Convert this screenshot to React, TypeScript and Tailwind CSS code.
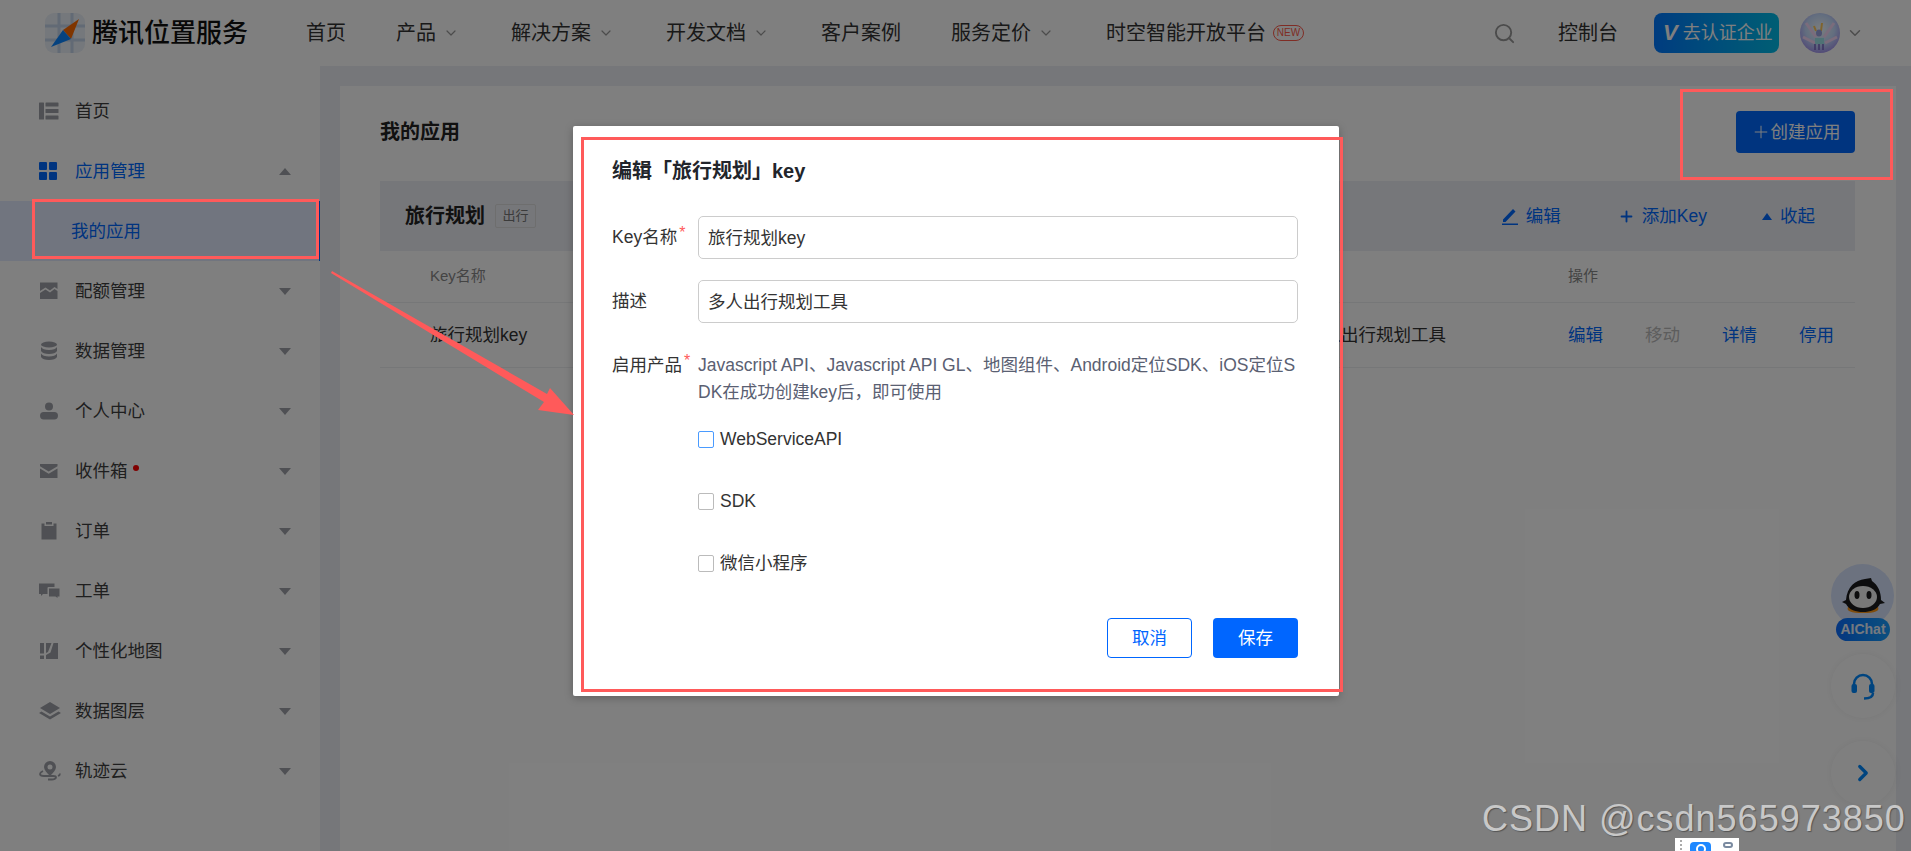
import { ChevronDown, Search, Plus, ChevronRight } from "lucide-react";
import type { ReactNode } from "react";

const font = `font-["Liberation_Sans","Noto_Sans_CJK_SC",sans-serif]`;

const navItems = [
  { label: "首页" },
  { label: "产品", arrow: true },
  { label: "解决方案", arrow: true },
  { label: "开发文档", arrow: true },
  { label: "客户案例" },
  { label: "服务定价", arrow: true },
];

const g = "#9fa1a8";

const sideItems: { label: string; icon: ReactNode; dot?: boolean; active?: boolean; open?: boolean; noArrow?: boolean }[] = [
  {
    label: "首页",
    noArrow: true,
    icon: (
      <svg width="20" height="20" viewBox="0 0 20 20" fill={g}>
        <rect x="0" y="1.5" width="5" height="17" rx="0.5" />
        <rect x="6.5" y="1.5" width="13" height="4" rx="0.5" />
        <rect x="6.5" y="8" width="13" height="4" rx="0.5" />
        <rect x="6.5" y="14.5" width="13" height="4" rx="0.5" />
      </svg>
    ),
  },
  {
    label: "应用管理",
    active: true,
    open: true,
    icon: (
      <svg width="20" height="20" viewBox="0 0 20 20" fill="#0069ff">
        <rect x="0" y="1" width="8" height="8" rx="1" />
        <rect x="10" y="1" width="8" height="8" rx="1" />
        <rect x="0" y="11" width="8" height="8" rx="1" />
        <rect x="10" y="11" width="8" height="8" rx="1" />
      </svg>
    ),
  },
  {
    label: "配额管理",
    icon: (
      <svg width="20" height="20" viewBox="0 0 20 20" fill={g}>
        <path d="M1 1.5h17.500v6.500l-3-2-4.500 3.500-4.500-3-5.500 3.500z" />
        <path d="M1 12l5.500-3.500 4.500 3 4.500-3.500 3 2v8H1z" />
      </svg>
    ),
  },
  {
    label: "数据管理",
    icon: (
      <svg width="20" height="20" viewBox="0 0 20 20" fill={g}>
        <ellipse cx="10" cy="3.500" rx="8" ry="3" />
        <path d="M2 6c1 2 4 3 8 3s7-1 8-3v4c-1 2-4 3-8 3s-7-1-8-3z" />
        <path d="M2 12.500c1 2 4 3 8 3s7-1 8-3V16c-1 2-4 3-8 3s-7-1-8-3z" />
      </svg>
    ),
  },
  {
    label: "个人中心",
    icon: (
      <svg width="20" height="20" viewBox="0 0 20 20" fill={g}>
        <circle cx="10" cy="5.500" r="4" />
        <rect x="1" y="11" width="18" height="7.500" rx="3.700" />
      </svg>
    ),
  },
  {
    label: "收件箱",
    dot: true,
    icon: (
      <svg width="20" height="20" viewBox="0 0 20 20" fill={g}>
        <path d="M1 3h17.500v2.200L9.700 10.500 1 5.200z" />
        <path d="M1 7.500l8.700 5.200 8.800-5.200V17H1z" />
      </svg>
    ),
  },
  {
    label: "订单",
    icon: (
      <svg width="20" height="20" viewBox="0 0 20 20" fill={g}>
        <path d="M2.500 2.500h3V5h9V2.500h3v16h-15z" />
        <rect x="7" y="1" width="6" height="2.500" />
      </svg>
    ),
  },
  {
    label: "工单",
    icon: (
      <svg width="22" height="20" viewBox="0 0 22 20" fill={g}>
        <path d="M0 2.500h15.500v3.500H9.500q-1 0-1 1v6H4l-2 2v-2H0z" />
        <path d="M10 7.500h10.500v8h-2v1.500l-2-1.500H10z" />
      </svg>
    ),
  },
  {
    label: "个性化地图",
    icon: (
      <svg width="20" height="20" viewBox="0 0 20 20" fill={g}>
        <path d="M1 2h4v10.500H1zM1 14.500h4V18H1z" />
        <path d="M7 2h5.500L9 11l-2 1zM14.500 2H19v16H7v-4l4.500-2.500z" />
      </svg>
    ),
  },
  {
    label: "数据图层",
    icon: (
      <svg width="22" height="20" viewBox="0 0 22 20" fill={g}>
        <path d="M11 1l10 6-10 6L1 7z" />
        <path d="M0 12l2.500-1.500L11 15.500l8.500-5L22 12 11 18.500z" />
      </svg>
    ),
  },
  {
    label: "轨迹云",
    icon: (
      <svg width="22" height="20" viewBox="0 0 22 20" fill="none">
        <path fillRule="evenodd" clipRule="evenodd" d="M11 0a6 6 0 0 1 6 6c0 3-3 6-6 9-3-3-6-6-6-9a6 6 0 0 1 6-6zm0 3.500a2.500 2.500 0 1 0 0 5 2.500 2.500 0 0 0 0-5z" fill={g} />
        <path d="M4 10c-2 1-3 2-3 3 0 1.500 2 2 4 2h9c2 0 3 .5 3 1.500S15 18.500 13 18.500H9m12-6c0 1-.7 2-2 2.500" stroke={g} strokeWidth="1.800" />
      </svg>
    ),
  },
];

function Caret({ up }: { up?: boolean }) {
  return (
    <svg width="12" height="7" viewBox="0 0 12 7" fill={g} className="ml-auto mr-[29px]">
      <polygon points={up ? "6,0 12,7 0,7" : "0,0 12,0 6,7"} />
    </svg>
  );
}

function SideRow({ item }: { item: (typeof sideItems)[number] }) {
  return (
    <div className="flex h-[60px] items-center pl-[39px]">
      <span className="flex w-[36px] shrink-0 items-center">{item.icon}</span>
      <span className={item.active ? "text-[#0069ff]" : "text-[#3f3f3f]"}>{item.label}</span>
      {item.dot && <span className="mb-[6px] ml-[5px] h-[6px] w-[6px] rounded-full bg-[#f00]" />}
      {!item.noArrow && <Caret up={item.open} />}
    </div>
  );
}

function Header() {
  return (
    <header className="flex h-[66px] shrink-0 items-center bg-white pl-[45px] pr-[47px] text-[20px] text-[#333]">
      <svg width="40" height="40" viewBox="0 0 40 40" className="shrink-0">
        <rect width="40" height="40" rx="9" fill="#eaf0f8" />
        <path d="M0 13h40M0 27h40M14 0v40M27 0v40" stroke="#c4d4ea" strokeWidth="3" />
        <path d="M34 6L18 17l8 9z" fill="#ff6a00" />
        <path d="M6 34l12-17 8 9z" fill="#0a84ff" />
      </svg>
      <span className="ml-[7px] text-[26px] font-medium leading-none text-[#111]">腾讯位置服务</span>
      <nav className="ml-[58px] flex items-center gap-[50px]">
        {navItems.map((n) => (
          <span key={n.label} className={n.arrow ? "mr-[2px] flex items-center" : "flex items-center"}>
            {n.label}
            {n.arrow && <ChevronDown size={16} strokeWidth={1.8} className="ml-[7px] text-[#999]" />}
          </span>
        ))}
        <span className="flex items-center">
          时空智能开放平台
          <span className="ml-[7px] flex h-[16px] w-[31px] items-center justify-center rounded-full border border-[#ff5a4a] text-[10px] leading-none text-[#ff5a4a]">
            NEW
          </span>
        </span>
      </nav>
      <div className="ml-auto flex items-center">
        <Search size={23} strokeWidth={2} className="text-[#999]" />
        <span className="ml-[42px]">控制台</span>
        <span className="ml-[36px] flex h-[40px] w-[125px] items-center rounded-[8px] bg-gradient-to-r from-[#0078ff] to-[#00bce8] pl-[9px] text-[18px] text-white">
          <span className="mr-[5px] text-[22px] font-bold italic leading-none">V</span>去认证企业
        </span>
        <svg width="40" height="40" viewBox="0 0 40 40" className="ml-[21px] shrink-0">
          <defs>
            <radialGradient id="av" cx="50%" cy="40%" r="60%">
              <stop offset="0" stopColor="#f6fcff" />
              <stop offset="0.6" stopColor="#c6dcff" />
              <stop offset="1" stopColor="#a496ee" />
            </radialGradient>
          </defs>
          <circle cx="20" cy="20" r="20" fill="url(#av)" />
          <path d="M6 10l10 14M34 10L24 24M3 24l12 6M37 24l-12 6" stroke="#f6d8f8" strokeWidth="3" />
          <path d="M14 13l2 5M22 10l-1 8" stroke="#ffc85a" strokeWidth="2" />
          <ellipse cx="19" cy="20" rx="3" ry="3.500" fill="#9aa2e0" />
          <path d="M15 25h9v6h-9z" fill="#9fe4ea" />
          <path d="M15 31v6M19 31v6M23 31v6" stroke="#7566c0" strokeWidth="1.500" />
        </svg>
        <ChevronDown size={18} strokeWidth={2} className="ml-[6px] text-[#999]" />
      </div>
    </header>
  );
}

function Sidebar() {
  return (
    <aside className="w-[320px] shrink-0 bg-white pt-[15px] text-[17.5px]">
      <SideRow item={sideItems[0]} />
      <SideRow item={sideItems[1]} />
      <div className="flex h-[60px] items-center border-r border-[#0069ff] bg-[#e3ebfe] pl-[71px] text-[#0069ff]">我的应用</div>
      {sideItems.slice(2).map((item) => (
        <SideRow key={item.label} item={item} />
      ))}
    </aside>
  );
}

function GroupAction({ icon, label, className }: { icon: ReactNode; label: string; className: string }) {
  return (
    <span className={`flex items-center ${className}`}>
      {icon}
      {label}
    </span>
  );
}

function Main() {
  return (
    <main className="min-w-0 flex-1 bg-[#eceef4] pl-[20px] pr-[15px] pt-[20px]">
      <div className="h-full bg-white pl-[40px] pr-[41px] pt-[25px] text-[17.5px] text-[#333]">
        <div className="flex h-[42px] items-center justify-between">
          <h2 className="text-[20px] font-bold text-[#222]">我的应用</h2>
          <span className="flex h-[42px] w-[119px] items-center justify-center rounded-[4px] bg-[#0069ff] text-[17.5px] text-white">
            <Plus size={20} strokeWidth={1.200} />创建应用
          </span>
        </div>
        <div className="mt-[28px] flex h-[70px] items-center bg-[#eceef4] pl-[25px] pr-[40px]">
          <span className="text-[20px] font-bold text-[#222]">旅行规划</span>
          <span className="ml-[10px] flex h-[24px] w-[41px] items-center justify-center rounded-[2px] border border-[#ddd] text-[13px] text-[#777]">出行</span>
          <div className="ml-auto flex items-center text-[#0069ff]">
            <GroupAction
              className="mr-[57px]"
              label="编辑"
              icon={
                <svg width="17" height="18" viewBox="0 0 17 18" fill="#0069ff" className="mr-[7px]">
                  <path d="M1 12.500L11 2l2.500 2.500-10 10.500H1zM0 16.500h16V18H0z" />
                </svg>
              }
            />
            <GroupAction className="mr-[55px]" label="添加Key" icon={<Plus size={17} strokeWidth={2.600} className="mr-[7px]" />} />
            <GroupAction
              label="收起"
              icon={
                <svg width="10" height="7" viewBox="0 0 10 7" fill="#0069ff" className="mr-[8px]">
                  <polygon points="5,0 10,7 0,7" />
                </svg>
              }
            />
          </div>
        </div>
        <div className="flex h-[52px] items-center border-b border-[#eceef0] pl-[50px] text-[15px] text-[#888]">
          <span className="w-[876px] shrink-0">Key名称</span>
          <span className="w-[262px] shrink-0">描述</span>
          <span>操作</span>
        </div>
        <div className="flex h-[65px] items-center border-b border-[#eceef0] pl-[50px]">
          <span className="w-[876px] shrink-0">旅行规划key</span>
          <span className="w-[262px] shrink-0">多人出行规划工具</span>
          <span className="flex">
            <span className="w-[77px] shrink-0 text-[#0069ff]">编辑</span>
            <span className="w-[77px] shrink-0 text-[#bbb]">移动</span>
            <span className="w-[77px] shrink-0 text-[#0069ff]">详情</span>
            <span className="shrink-0 text-[#0069ff]">停用</span>
          </span>
        </div>
      </div>
    </main>
  );
}

function Floaters() {
  return (
    <div className="absolute left-[1831px] top-[564px] flex w-[64px] flex-col items-center">
      <div className="relative h-[77px] w-[64px]">
        <div className="flex h-[63px] w-[63px] items-center justify-center rounded-full bg-[#d8e4ff]">
          <svg width="50" height="38" viewBox="0 0 50 38">
            <path d="M10 30q-3 6 15 6t15-6z" fill="#ff9a1a" />
            <path d="M4 25l4-2C9 10 17 3 27 2l6-1 1 3c6 4 9 11 9 19l4 3-5 1c-3 6-10 8-17 8S11 33 8 27z" fill="#1b1b1d" />
            <ellipse cx="25" cy="20" rx="14" ry="11" fill="#f1f1f1" />
            <ellipse cx="19" cy="18" rx="2.500" ry="4" fill="#1b1b1d" />
            <ellipse cx="31" cy="18" rx="2.500" ry="4" fill="#1b1b1d" />
          </svg>
        </div>
        <span className="absolute left-[5px] top-[54px] flex h-[23px] w-[54px] items-center justify-center rounded-full bg-gradient-to-r from-[#0d6cff] to-[#1b9fff] text-[14px] font-bold text-[#e9f2ff]">AIChat</span>
      </div>
      <div className="mt-[13px] flex h-[64px] w-[64px] items-center justify-center rounded-full bg-white shadow-[0_0_8px_rgba(0,0,0,0.06)]">
        <svg width="24" height="27" viewBox="0 0 24 27" fill="none">
          <path d="M3 13V11a9 9 0 0 1 18 0v2" stroke="#0088ff" strokeWidth="2.500" />
          <rect x="0.500" y="11" width="5.500" height="9" rx="2" fill="#0088ff" />
          <rect x="18" y="11" width="5.500" height="9" rx="2" fill="#0088ff" />
          <path d="M22 20c0 3-2.500 5.500-9 5.500" stroke="#0088ff" strokeWidth="2.500" />
        </svg>
      </div>
      <div className="mt-[23px] flex h-[64px] w-[64px] items-center justify-center rounded-full bg-white shadow-[0_0_8px_rgba(0,0,0,0.06)]">
        <ChevronRight size={26} strokeWidth={3} className="text-[#0088ff]" />
      </div>
    </div>
  );
}

function Req() {
  return <span className="relative -top-[5px] ml-[2px] text-[16px] leading-none text-[#ff5a5a]">*</span>;
}

function Field({ label, value, required }: { label: string; value: string; required?: boolean }) {
  return (
    <div className="flex items-center">
      <label className="w-[86px] shrink-0">
        {label}
        {required && <Req />}
      </label>
      <div className="flex h-[43px] flex-1 items-center rounded-[5px] border border-[#ccc] px-[9px] pt-[1px]">{value}</div>
    </div>
  );
}

function Check({ label, focus }: { label: string; focus?: boolean }) {
  return (
    <div className="flex h-[26px] items-center">
      <span className={`h-[17px] w-[16px] rounded-[2px] border ${focus ? "border-[#4a9bff]" : "border-[#bbb]"}`} />
      <span className="ml-[6px]">{label}</span>
    </div>
  );
}

function Modal() {
  return (
    <div className="absolute left-[573px] top-[126px] h-[570px] w-[766px] rounded-[2px] bg-white pl-[39px] pr-[41px] pt-[31px] text-[17.5px] text-[#333] shadow-[0_2px_8px_rgba(0,0,0,0.25)]">
      <h3 className="text-[20px] font-bold leading-[28px] text-[#22252b]">编辑「旅行规划」key</h3>
      <div className="mt-[31px]">
        <Field label="Key名称" value="旅行规划key" required />
      </div>
      <div className="mt-[21px]">
        <Field label="描述" value="多人出行规划工具" />
      </div>
      <div className="mt-[29px] flex">
        <label className="w-[86px] shrink-0 leading-[27px]">
          启用产品
          <Req />
        </label>
        <div className="min-w-0 flex-1">
          <p className="break-all leading-[27px] text-[#5a6072]">
            Javascript API、Javascript API GL、地图组件、Android定位SDK、iOS定位SDK在成功创建key后，即可使用
          </p>
          <div className="mt-[20px] flex flex-col gap-[36px]">
            <Check label="WebServiceAPI" focus />
            <Check label="SDK" />
            <Check label="微信小程序" />
          </div>
          <div className="mt-[42px] flex justify-end gap-[21px]">
            <button className="h-[40px] w-[85px] rounded-[4px] border border-[#0066ff] text-[#0066ff]">取消</button>
            <button className="h-[40px] w-[85px] rounded-[4px] bg-[#0066ff] text-white">保存</button>
          </div>
        </div>
      </div>
    </div>
  );
}

function Annotations() {
  return (
    <>
      <svg width="1911" height="851" className="pointer-events-none absolute left-0 top-0">
        <polygon points="332,271 547,394 550,388 574,415 538,410 544,402 331,273" fill="#ff5a5a" />
      </svg>
      <div className="absolute left-[32px] top-[199px] h-[60px] w-[287px] border-[3px] border-[#ff5a5a]" />
      <div className="absolute left-[1680px] top-[89px] h-[91px] w-[213px] border-[3px] border-[#ff5a5a]" />
      <div className="absolute left-[581px] top-[137px] h-[555px] w-[762px] border-[3px] border-[#ff5a5a]" />
    </>
  );
}

export default function App() {
  return (
    <div className={`${font} relative h-[851px] w-[1911px] overflow-hidden bg-white`}>
      <div className="flex h-full flex-col">
        <Header />
        <div className="flex min-h-0 flex-1">
          <Sidebar />
          <Main />
        </div>
      </div>
      <Floaters />
      <div className="absolute inset-0 bg-black/50" />
      <Modal />
      <Annotations />
      <span className="absolute left-[1482px] top-[799px] whitespace-nowrap text-[36px] leading-[40px] tracking-[1px] text-[#c8c8c8] [text-shadow:1px_1px_1px_#555]">
        CSDN @csdn565973850
      </span>
      <div className="absolute left-[1675px] top-[838px] flex h-[13px] w-[64px] overflow-hidden bg-white">
        <span className="ml-[5px] mt-[2px] h-[10px] border-l-2 border-dotted border-[#aaa]" />
        <span className="ml-[8px] mt-[4px] flex h-[16px] w-[21px] justify-center rounded-[4px] bg-[#1e88ff] pt-[2px]">
          <span className="h-[10px] w-[10px] rounded-full border-2 border-white" />
        </span>
        <span className="ml-[12px] mt-[4px] h-[6px] w-[10px] rounded-[3px] border-2 border-[#7a8aa0]" />
      </div>
    </div>
  );
}
